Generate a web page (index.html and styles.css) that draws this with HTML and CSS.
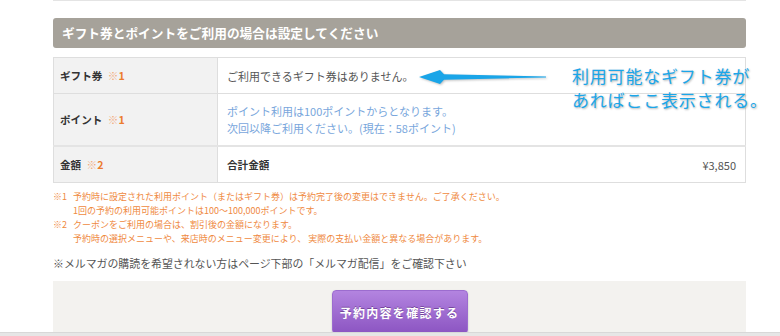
FILE: index.html
```html
<!DOCTYPE html>
<html>
<head>
  <title>ご予約内容の入力</title>
  <link rel="stylesheet" href="styles.css">
</head>
<body>

  <div class="page">
    <div class="rule"></div>

    <h2 class="section-title">ギフト券とポイントをご利用の場合は設定してください</h2>

    <table class="pay-table">
      <tr>
        <th>ギフト券 <span class="mark">※<b>1</b></span></th>
        <td>ご利用できるギフト券はありません。</td>
      </tr>
      <tr class="point-row">
        <th>ポイント <span class="mark">※<b>1</b></span></th>
        <td class="point-info">ポイント利用は100ポイントからとなります。<br>次回以降ご利用ください。(現在：58ポイント)</td>
      </tr>
      <tr class="total-row">
        <th>金額 <span class="mark">※<b>2</b></span></th>
        <td>
          <div class="total">
            <strong>合計金額</strong>
            <span>¥3,850</span>
          </div>
        </td>
      </tr>
    </table>

    <div class="notes">
      <span>※1</span>
      <span>予約時に設定された利用ポイント（またはギフト券）は予約完了後の変更はできません。ご了承ください。<br>1回の予約の利用可能ポイントは100～100,000ポイントです。</span>
      <span>※2</span>
      <span>クーポンをご利用の場合は、割引後の金額になります。<br>予約時の選択メニューや、来店時のメニュー変更により、 実際の支払い金額と異なる場合があります。</span>
    </div>

    <p class="mail-note">※メルマガの購読を希望されない方はページ下部の「メルマガ配信」をご確認下さい</p>

    <div class="confirm-area">
      <button class="confirm-button">予約内容を確認する</button>
    </div>
  </div>

  <!-- annotation drawn over the screenshot -->
  <svg class="callout-arrow" width="128" height="18" viewBox="0 0 128 18">
    <path d="M0 9 L21 2 L25 6.3 L127 8.4 L127 9.4 L25 11.7 L21 16 Z" fill="#1aa5e8"/>
  </svg>
  <div class="callout">
    <div>利用可能なギフト券が</div>
    <div>あればここ表示される。</div>
  </div>

  <div class="bottom-bar"></div>

</body>
</html>
```

FILE: styles.css
```css
body {
  font-family: "Noto Sans CJK JP", "Noto Sans", sans-serif;
  margin: 0;
  padding: 0;
  background-color: #fff;
  color: #555;
  overflow: hidden;
}

.page {
  width: 693px;
  margin-left: 53px;
}

.rule {
  height: 1px;
  background-color: #e4e4e4;
}

.section-title {
  margin: 17px 0 0 0;
  height: 30px;
  line-height: 30px;
  padding-left: 9px;
  background-color: #a6a29a;
  color: #fff;
  font-size: 12.7px;
  font-weight: bold;
  border-radius: 3px;
}

.pay-table {
  width: 100%;
  margin-top: 9px;
  border-collapse: collapse;
  font-size: 11px;
}

.pay-table th,
.pay-table td {
  border: 1px solid #dedede;
  height: 35px;
  padding: 0;
  vertical-align: middle;
}

.pay-table th {
  width: 157px;
  padding-left: 6px;
  background-color: #f2f2f2;
  color: #333;
  text-align: left;
  font-size: 10.6px;
  font-weight: bold;
}

.pay-table td {
  padding: 0 9px 0 9px;
  text-align: left;
}

.point-row th,
.point-row td {
  height: 51px;
}

.total-row th,
.total-row td {
  border-top: 2px solid #e4e4e4;
}

.point-info {
  color: #78a6dc;
  line-height: 17px;
}

.mark {
  color: #f3aa78;
  font-weight: normal;
  margin-left: 3px;
}

.mark b {
  color: #ec7b2e;
}

.total {
  display: flex;
  justify-content: space-between;
}

.total strong {
  color: #333;
  font-size: 10.6px;
}

.notes {
  display: grid;
  grid-template-columns: 20px 1fr;
  margin-top: 7px;
  font-size: 9px;
  line-height: 14px;
  color: #ef8a3f;
}

.mail-note {
  margin: 9px 0 0 0;
  font-size: 10.9px;
  line-height: 16px;
}

.confirm-area {
  margin-top: 10px;
  height: 80px;
  padding-top: 9px;
  background-color: #f3f2ef;
  text-align: center;
}

.confirm-button {
  width: 136px;
  height: 44px;
  border: 1px solid #9c6ccf;
  border-radius: 4px;
  background: linear-gradient(#b384e0, #8c55c2);
  color: #fff;
  font-family: inherit;
  font-size: 12px;
  font-weight: bold;
  letter-spacing: 1.3px;
  text-shadow: 0 -1px 0 rgba(60, 20, 90, 0.45);
  box-shadow: 0 1px 2px rgba(0, 0, 0, 0.2);
  cursor: pointer;
}

.callout-arrow {
  position: absolute;
  left: 419px;
  top: 68px;
  filter: drop-shadow(1px 1px 1px rgba(0, 0, 0, 0.25));
}

.callout {
  position: absolute;
  left: 572px;
  top: 64px;
  font-size: 17px;
  line-height: 24px;
  letter-spacing: 0.8px;
  color: #1ba6e9;
  text-shadow: 1px 1px 2px rgba(0, 0, 0, 0.3), 0 0 2px #fff;
}

.bottom-bar {
  position: fixed;
  left: 0;
  right: 0;
  bottom: 0;
  height: 3px;
  background-color: #e6e6e6;
  border-top: 1px solid #d8d8d8;
}
```
